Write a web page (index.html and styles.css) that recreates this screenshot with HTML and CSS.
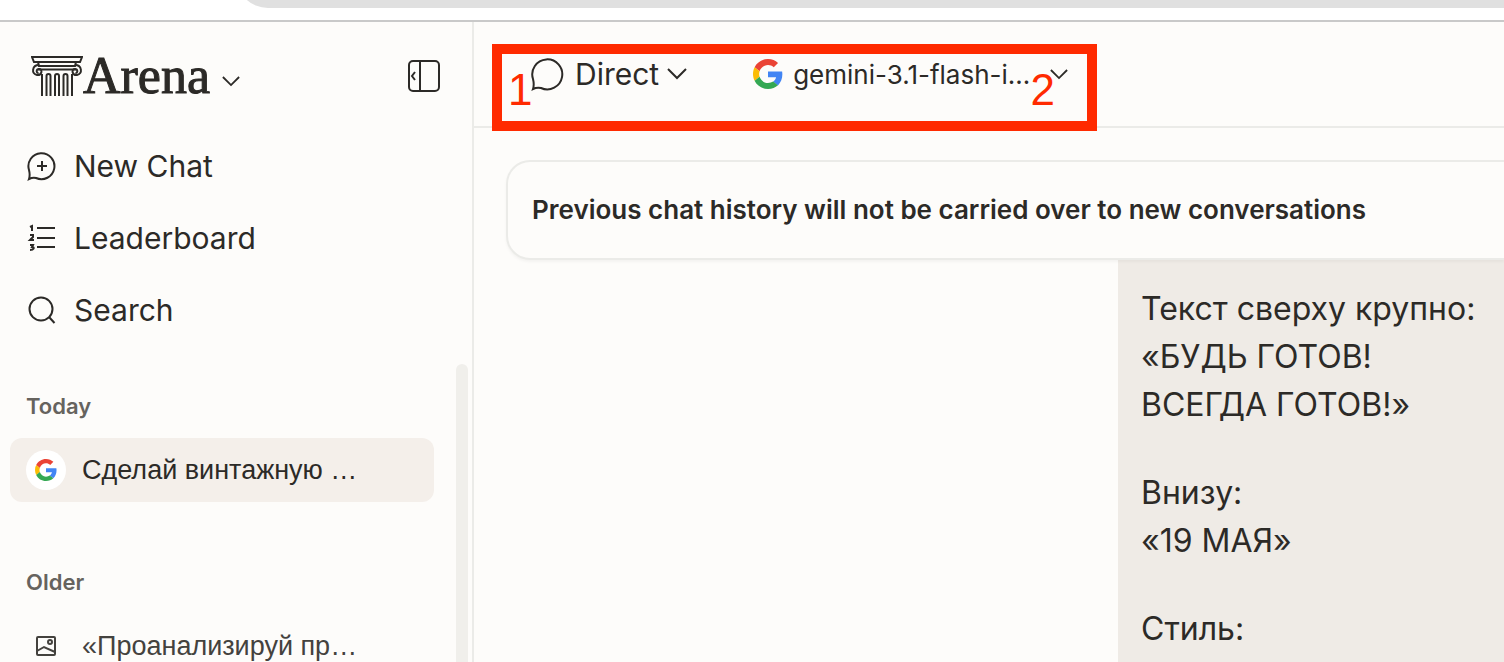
FILE: index.html
```
<!DOCTYPE html>
<html lang="en">
    <head>
        <meta charset="UTF-8" />
        <meta name="viewport" content="width=device-width, initial-scale=1.0" />
        <title>Arena</title>
        <link rel="stylesheet" href="styles.css">
    </head>
    <body>
        <svg class="sprite" aria-hidden="true">
            <symbol id="google" viewBox="0 0 48 48">
                <path fill="#ea4335" d="M24 9.5c3.54 0 6.71 1.22 9.21 3.6l6.85-6.85C35.9 2.38 30.47 0 24 0 14.62 0 6.51 5.38 2.56 13.22l7.98 6.19C12.43 13.72 17.74 9.5 24 9.5z" />
                <path fill="#4285f4" d="M46.98 24.55c0-1.57-.15-3.09-.38-4.55H24v9.02h12.94c-.58 2.96-2.26 5.48-4.78 7.18l7.73 6c4.51-4.18 7.09-10.36 7.09-17.65z" />
                <path fill="#fbbc05" d="M10.53 28.59c-.48-1.45-.76-2.99-.76-4.59s.27-3.14.76-4.59l-7.98-6.19C.92 16.46 0 20.12 0 24c0 3.88.92 7.54 2.56 10.78l7.97-6.19z" />
                <path fill="#34a853" d="M24 48c6.48 0 11.93-2.13 15.89-5.81l-7.73-6c-2.15 1.45-4.92 2.3-8.16 2.3-6.26 0-11.57-4.22-13.47-9.91l-7.98 6.19C6.51 42.62 14.62 48 24 48z" />
            </symbol>
            <symbol id="chevron" viewBox="0 0 20 12">
                <path d="M1 1l9 9 9-9" />
            </symbol>
        </svg>

        <div class="browser-bar">
            <div class="address"></div>
        </div>

        <div class="app">
            <aside class="sidebar">
                <div class="brand-row">
                    <button class="brand" aria-label="Arena menu">
                        <svg class="column" viewBox="0 0 52 40">
                            <path d="M1 1h50l-2 5H3z" />
                            <path d="M7 6l1 4h36l1-4M7 13.5h38" />
                            <path d="M8 9c-7 0-8 9-2 10 5 .5 6-6 2-6-3 0-3 4-.5 4" />
                            <path d="M44 9c7 0 8 9 2 10-5 .5-6-6-2-6 3 0 3 4 .5 4" />
                            <path d="M11 18v22M41 18v22M15.500 40V20a2 2 0 0 1 4 0v20M24 40V20a2 2 0 0 1 4 0v20M32.500 40V20a2 2 0 0 1 4 0v20" />
                        </svg>
                        <span class="brand-name">Arena</span>
                        <svg class="chevron small"><use href="#chevron" /></svg>
                    </button>
                    <button class="collapse" aria-label="Collapse sidebar">
                        <svg viewBox="0 0 34 34">
                            <rect x="2" y="2" width="30" height="30" rx="4" />
                            <path d="M13 2v30M8 13l-3 4 3 4" />
                        </svg>
                    </button>
                </div>

                <nav class="menu">
                    <a href="#new">
                        <svg viewBox="0 0 30 30">
                            <path d="M2 28c1-3 1-5 0-9A13 13 0 1 1 9 27q-3-1-7 1zM15 10v10M10 15h10" />
                        </svg>
                        New Chat
                    </a>
                    <a href="#leaderboard">
                        <svg viewBox="0 0 30 30">
                            <path d="M10 5h18M10 15h18M10 24h18" />
                            <path d="M3 4l2-1v5M3 12h3v2l-3 3h4M3 22h3l-1 2c3 0 2 3-2 3" />
                        </svg>
                        Leaderboard
                    </a>
                    <a href="#search">
                        <svg viewBox="0 0 30 30">
                            <circle cx="14" cy="14" r="11.5" />
                            <path d="M22 22l5.500 6" />
                        </svg>
                        Search
                    </a>
                </nav>

                <div class="history">
                    <div class="history-list">
                        <h2>Today</h2>
                        <a class="chat active" href="#chat-1">
                            <span class="avatar"><svg><use href="#google" /></svg></span>
                            Сделай винтажную …
                        </a>
                        <h2>Older</h2>
                        <a class="chat" href="#chat-2">
                            <span class="avatar">
                                <svg viewBox="0 0 22 22">
                                    <rect x="2" y="2" width="18" height="18" rx="1" />
                                    <circle cx="15" cy="7" r="2" />
                                    <path d="M2 16l7-4 11 5" />
                                </svg>
                            </span>
                            «Проанализируй пр…
                        </a>
                    </div>
                    <div class="scrollbar"></div>
                </div>
            </aside>

            <main class="main">
                <header class="toolbar">
                    <button class="mode">
                        <svg class="bubble" viewBox="0 0 34 34">
                            <path d="M2 32c1-3 1-6 0-10A15 15 0 1 1 10 31q-4-1-8 1z" />
                        </svg>
                        Direct
                        <svg class="chevron"><use href="#chevron" /></svg>
                    </button>
                    <button class="model">
                        <svg class="logo"><use href="#google" /></svg>
                        gemini-3.1-flash-i…
                        <svg class="chevron small"><use href="#chevron" /></svg>
                    </button>
                    <div class="marker">
                        <span>1</span>
                        <span>2</span>
                    </div>
                </header>

                <div class="notice">Previous chat history will not be carried over to new conversations</div>

                <div class="message">
                    <p>Текст сверху крупно:<br>«БУДЬ ГОТОВ!<br>ВСЕГДА ГОТОВ!»</p>
                    <p>Внизу:<br>«19 МАЯ»</p>
                    <p>Стиль:</p>
                </div>
            </main>
        </div>
    </body>
</html>
```
FILE: styles.css
```
:root {
    --bg: #fdfcfa;
    --text: #2c2a27;
    --line: #ebebe8;
    --mark: #ff2a00;
}

* {
    box-sizing: border-box;
}

body {
    margin: 0;
    height: 100vh;
    display: flex;
    flex-direction: column;
    overflow: hidden;
    background: var(--bg);
    color: var(--text);
    font-family: Inter, "Liberation Sans", sans-serif;
}

svg {
    fill: none;
    stroke: currentColor;
    stroke-width: 2;
    flex-shrink: 0;
}

button {
    display: flex;
    align-items: center;
    padding: 0;
    border: 0;
    background: none;
    color: inherit;
    font: inherit;
    white-space: nowrap;
}

a {
    color: inherit;
    text-decoration: none;
}

.sprite {
    position: absolute;
    width: 0;
    height: 0;
}

#google {
    stroke: none;
}

.chevron {
    width: 20px;
    height: 12px;
}

.chevron.small {
    width: 18px;
    height: 11px;
}

/* browser chrome */
.browser-bar {
    flex: none;
    display: flex;
    align-items: flex-end;
    height: 22px;
    padding: 0 0 12px 236px;
    overflow: hidden;
    background: #fff;
    border-bottom: 2px solid #c9c9c9;
}

.address {
    flex: 1;
    height: 64px;
    border-bottom-left-radius: 32px;
    background: #e0e0e0;
}

.app {
    flex: 1;
    min-height: 0;
    display: flex;
}

/* sidebar */
.sidebar {
    flex: 0 0 474px;
    display: flex;
    flex-direction: column;
    border-right: 2px solid var(--line);
}

.brand-row {
    display: flex;
    align-items: center;
    justify-content: space-between;
    height: 108px;
    padding: 0 31px;
}

.column {
    width: 52px;
    height: 40px;
}

.brand-name {
    font-family: "Liberation Serif", serif;
    font-size: 52px;
    line-height: 56px;
    -webkit-text-stroke: 1px currentColor;
}

.brand .chevron {
    margin: 10px 0 0 12px;
}

.collapse svg {
    width: 34px;
    height: 34px;
}

.menu a {
    display: flex;
    align-items: center;
    gap: 17px;
    height: 72px;
    padding-left: 27px;
    font-size: 30px;
}

.menu svg {
    width: 30px;
    height: 30px;
}

.history {
    flex: 1;
    min-height: 0;
    display: flex;
    justify-content: space-between;
    margin-top: 18px;
    padding: 0 4px 0 10px;
    overflow: hidden;
}

.history-list {
    flex: 1;
    margin-right: 22px;
}

.history h2 {
    margin: 0;
    padding: 26px 16px 16px;
    color: #66635e;
    font-size: 22px;
    font-weight: 600;
    line-height: 32px;
}

.chat + h2 {
    padding-top: 64px;
}

.chat {
    display: flex;
    align-items: center;
    gap: 16px;
    height: 64px;
    padding-left: 16px;
    border-radius: 12px;
    color: #44423e;
    font-family: "Liberation Sans", sans-serif;
    font-size: 27px;
    white-space: nowrap;
}

.active {
    background: #f4efea;
    color: var(--text);
}

.avatar {
    display: grid;
    place-items: center;
    width: 40px;
    height: 40px;
    border-radius: 50%;
}

.active .avatar {
    background: #fff;
}

.avatar svg {
    width: 22px;
    height: 22px;
}

.scrollbar {
    width: 12px;
    border-radius: 6px 6px 0 0;
    background: #f0efeb;
}

/* chat area */
.main {
    flex: 1;
    min-width: 0;
    display: flex;
    flex-direction: column;
    overflow: hidden;
}

.toolbar {
    position: relative;
    flex: none;
    display: flex;
    align-items: center;
    gap: 66px;
    height: 106px;
    padding-left: 57px;
    border-bottom: 2px solid var(--line);
}

.mode {
    gap: 8px;
    font-size: 30px;
}

.bubble {
    width: 34px;
    height: 34px;
}

.mode .bubble {
    margin-right: 2px;
}

.model {
    gap: 10px;
    font-size: 26px;
}

.logo {
    width: 30px;
    height: 30px;
}

.model .chevron {
    margin-left: 10px;
}

.marker {
    position: absolute;
    top: 22px;
    left: 18px;
    display: flex;
    justify-content: space-between;
    width: 605px;
    height: 87px;
    padding: 12px 32px 0 6px;
    border: 10px solid var(--mark);
    color: var(--mark);
    font-family: "Liberation Sans", sans-serif;
    font-size: 44px;
    line-height: 48px;
}

.notice {
    z-index: 1;
    flex: none;
    margin: 32px 0 0 32px;
    padding: 0 24px;
    border: 2px solid var(--line);
    border-right: 0;
    border-radius: 24px 0 0 24px;
    box-shadow: 0 2px 3px #0000000a;
    background: var(--bg);
    font-size: 26px;
    font-weight: 600;
    line-height: 96px;
    white-space: nowrap;
}

.message {
    flex: 1;
    align-self: flex-end;
    width: 386px;
    padding: 25px 23px;
    background: #efebe6;
    font-size: 32px;
    line-height: 48px;
    white-space: nowrap;
}

.message p {
    margin: 0 0 40px;
}
```
